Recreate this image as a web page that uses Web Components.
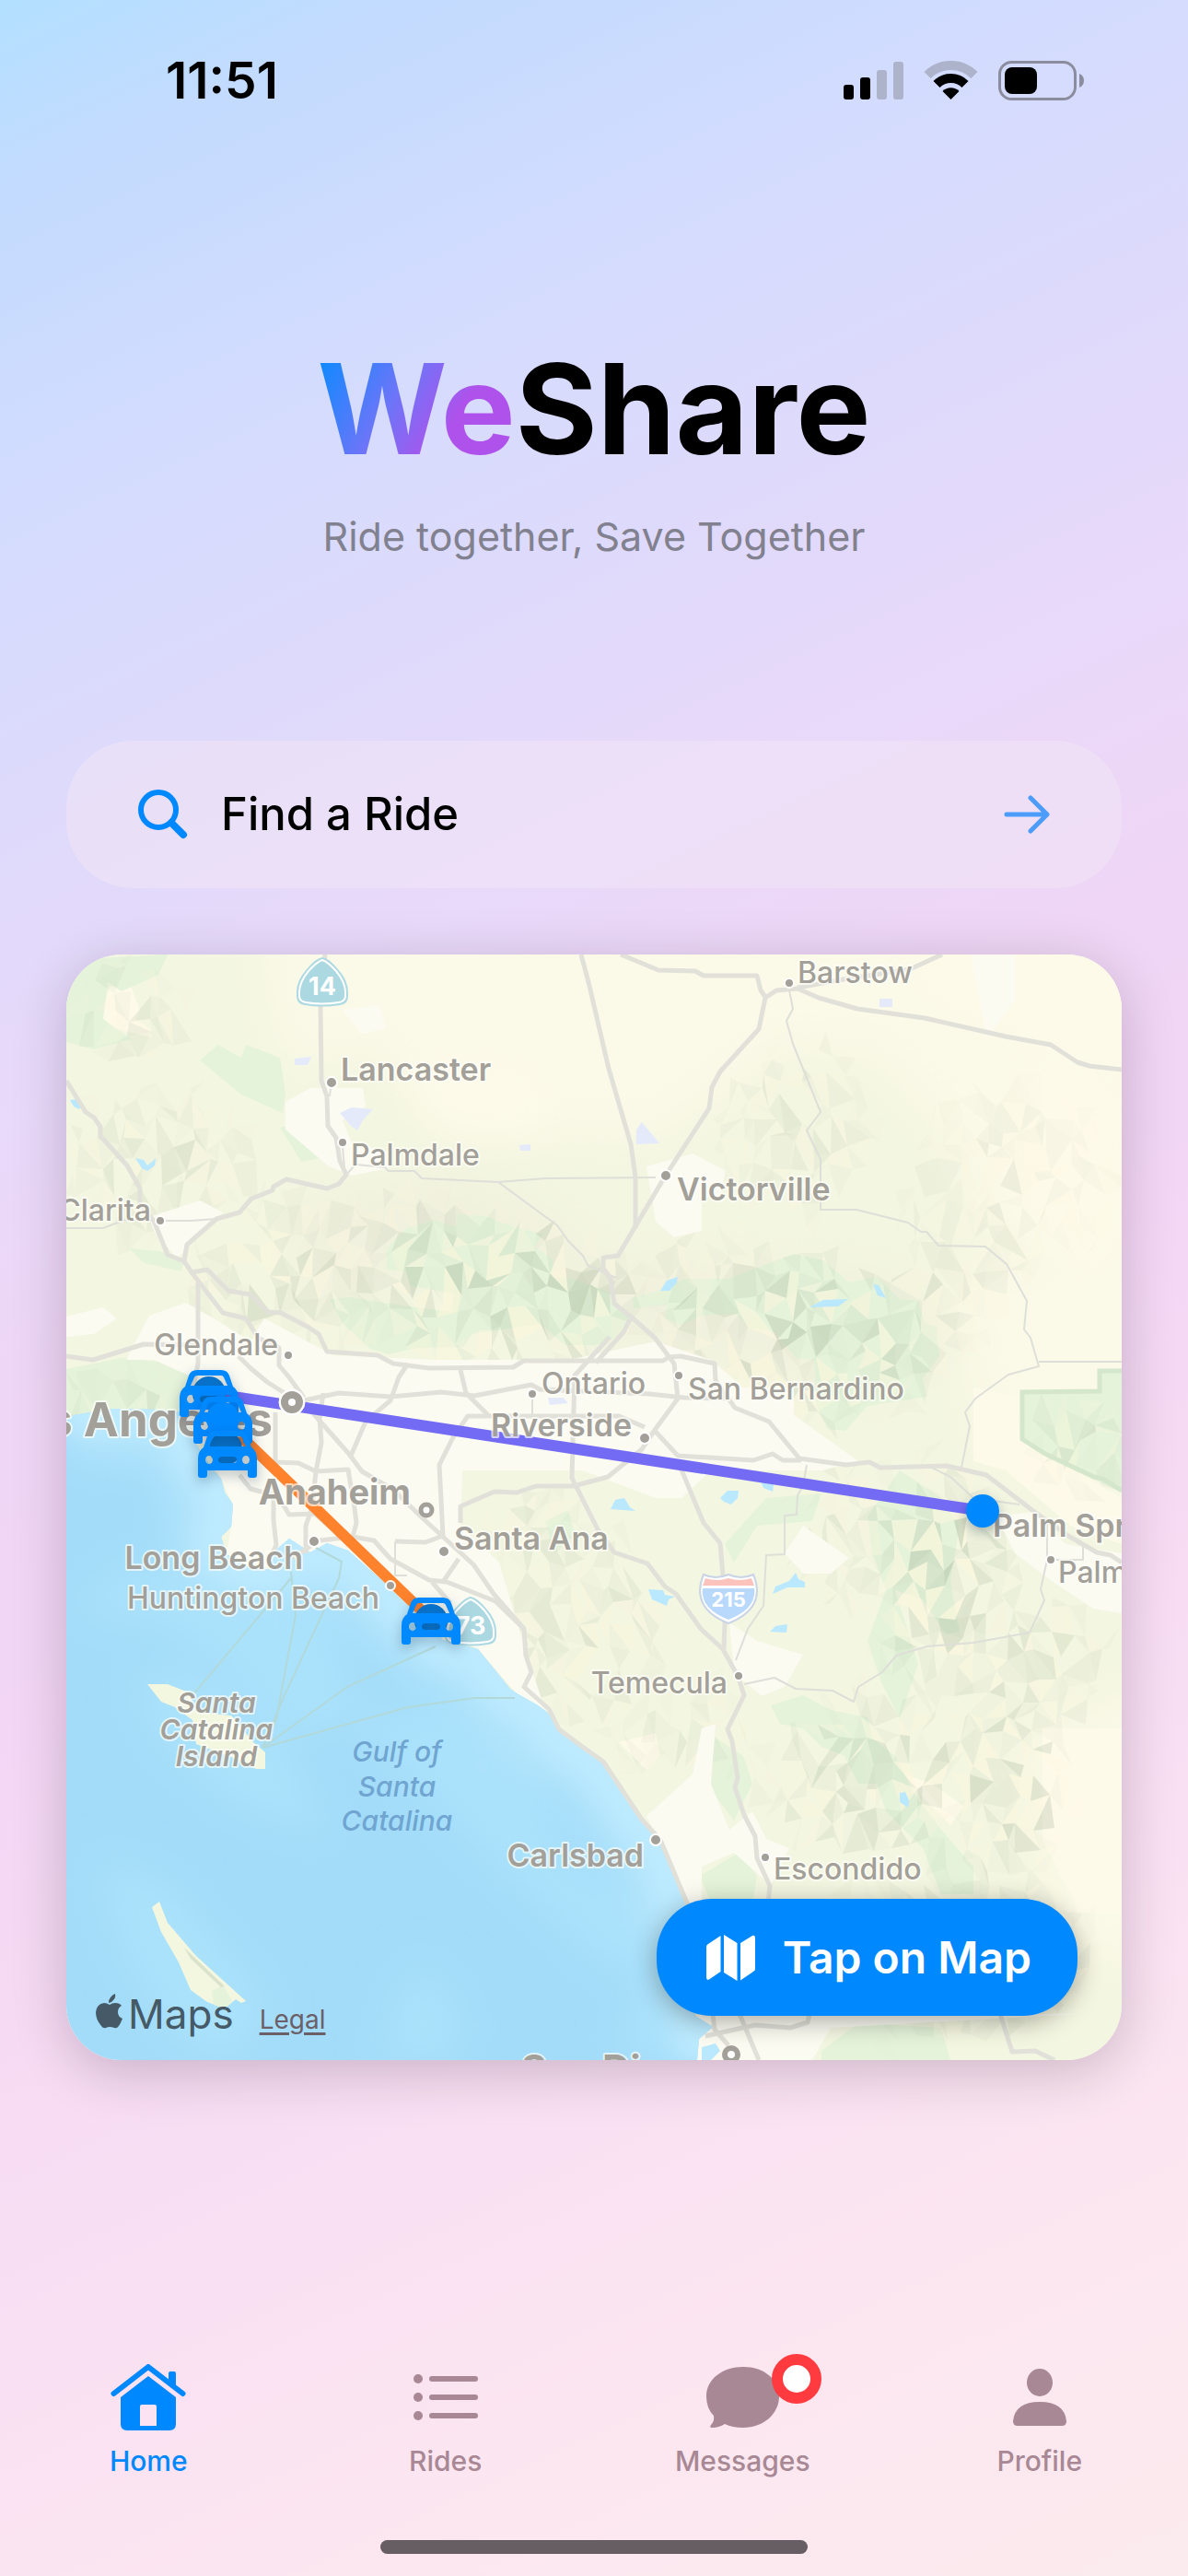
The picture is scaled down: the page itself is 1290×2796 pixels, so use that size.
<!DOCTYPE html>
<html lang="en">
<head>
<meta charset="utf-8">
<meta name="viewport" content="width=device-width, initial-scale=1">
<title>WeShare</title>
<style>
    html { height: 100%; }
    body {
        margin: 0;
        min-height: 100%;
        font-family: Inter, "Liberation Sans", sans-serif;
        color: #000;
        --blue: #0088ff;
        --muted: #a78894;
    }
</style>
</head>
<body>
<app-shell>
    <status-bar slot="top" time="11:51"></status-bar>
    <app-title lead="We" rest="Share">Ride together, Save Together</app-title>
    <search-pill>Find a Ride</search-pill>
    <ride-map>
        <map-button slot="action">Tap on Map</map-button>
    </ride-map>
    <tab-bar slot="bottom">
        <tab-item icon="home" active>Home</tab-item>
        <tab-item icon="list">Rides</tab-item>
        <tab-item icon="bubble" badge>Messages</tab-item>
        <tab-item icon="person">Profile</tab-item>
    </tab-bar>
</app-shell>

<script>
class AppShell extends HTMLElement {
    constructor() {
        super();
        this.attachShadow({ mode: 'open' }).innerHTML = `
            <style>
                :host {
                    display: flex; flex-direction: column; min-height: 100vh; box-sizing: border-box;
                    background: linear-gradient(155deg, #b3e0ff 0%, #c2dbfe 6%, #d4dcfe 17%, #dfdafb 27%, #e8d9fa 35%, #eed6f6 44%, #f3d6f5 55%, #f6daf3 65%, #f9e0f3 75%, #fce7f0 88%, #fbeaee 100%);
                }
                main { display: flex; flex-direction: column; gap: 72px; padding: 0 72px; }
                .bottom { margin-top: auto; }
            </style>
            <slot name="top"></slot>
            <main><slot></slot></main>
            <div class="bottom"><slot name="bottom"></slot></div>
        `;
    }
}

class StatusBar extends HTMLElement {
    constructor() {
        super();
        this.attachShadow({ mode: 'open' });
    }

    connectedCallback() {
        this.shadowRoot.innerHTML = `
            <style>
                :host { display: flex; justify-content: space-between; align-items: center; padding: 54px 113px 0 180px; }
                time { font-size: 55px; line-height: 66px; font-weight: 600; }
                .icons { display: flex; align-items: center; gap: 22px; }
                svg { display: block; }
            </style>
            <time>${this.getAttribute('time')}</time>
            <div class="icons">
                <svg width="65" height="42" viewBox="0 0 65 42">
                    <rect x="0" y="26" width="11" height="16" rx="3"/>
                    <rect x="18" y="18" width="11" height="24" rx="3"/>
                    <g fill="#adb3ca"><rect x="36" y="10" width="11" height="32" rx="3"/><rect x="54" y="1" width="11" height="41" rx="3"/></g>
                </svg>
                <svg width="59" height="42" viewBox="0 0 59 42" fill="none" stroke-width="10">
                    <path d="M4 15.5a36 36 0 0 1 51 0" stroke="#adb3ca"/>
                    <path d="M14 25.5a22 22 0 0 1 31 0" stroke="#000"/>
                    <path d="M29.500 42L20.500 33a12.700 12.700 0 0 1 18 0Z" fill="#000"/>
                </svg>
                <svg width="93" height="43" viewBox="0 0 93 43">
                    <rect x="1.500" y="1.500" width="82" height="40" rx="13" fill="none" stroke="#8b8c9e" stroke-width="3"/>
                    <rect x="7" y="7" width="35" height="29" rx="8"/>
                    <path d="M88 14q5 2 5 7.500t-5 7.500Z" fill="#8b8c9e"/>
                </svg>
            </div>
        `;
    }
}

class AppTitle extends HTMLElement {
    constructor() {
        super();
        this.attachShadow({ mode: 'open' });
    }

    connectedCallback() {
        this.shadowRoot.innerHTML = `
            <style>
                :host { display: block; text-align: center; padding: 240px 0 122px; }
                h1 { margin: 0; font-size: 136px; line-height: 168px; font-weight: 700; }
                h1 span { background: linear-gradient(120deg, #0a8bff 5%, #6d75f8 40%, #af52eb 66%); background-clip: text; -webkit-background-clip: text; color: transparent; }
                p { margin: 26px 0 0; font-size: 43px; line-height: 56px; color: #81818f; }
            </style>
            <h1><span>${this.getAttribute('lead')}</span>${this.getAttribute('rest')}</h1>
            <p><slot></slot></p>
        `;
    }
}

class SearchPill extends HTMLElement {
    constructor() {
        super();
        this.attachShadow({ mode: 'open' }).innerHTML = `
            <style>
                :host { display: block; }
                button {
                    display: flex; align-items: center; gap: 36px; width: 100%; height: 160px; box-sizing: border-box;
                    padding: 0 78px; border: 0; border-radius: 72px; background: rgba(240, 230, 246, .55);
                    font: 500 49px/60px Inter, "Liberation Sans", sans-serif; color: #000; text-align: left;
                }
                .label { flex: 1; }
                svg { fill: none; stroke-linecap: round; stroke-linejoin: round; flex: none; }
            </style>
            <button type="button">
                <svg width="54" height="54" viewBox="0 0 54 54" stroke="#0088ff">
                    <circle cx="22" cy="22" r="19" stroke-width="6"/><path d="M36 36L49 49" stroke-width="8"/>
                </svg>
                <span class="label"><slot></slot></span>
                <svg width="50" height="42" viewBox="0 0 50 42" stroke="#4c9dfa" stroke-width="5">
                    <path d="M3 21H46M29 3L47 21L29 39"/>
                </svg>
            </button>
        `;
    }
}

class MapButton extends HTMLElement {
    constructor() {
        super();
        this.attachShadow({ mode: 'open' }).innerHTML = `
            <style>
                :host { display: block; }
                button {
                    display: flex; align-items: center; gap: 30px; height: 127px; padding: 0 50px 0 54px; border: 0; border-radius: 60px;
                    background: #0088ff; color: #fff; font: 600 48px/60px Inter, "Liberation Sans", sans-serif;
                    box-shadow: 0 6px 28px rgba(0, 0, 0, .32);
                }
            </style>
            <button type="button">
                <svg width="53" height="50" viewBox="0 0 53 50" fill="#fff">
                    <path d="M2 10L15.500 1V40L3 48.500Q0 50 0 46V13Q0 11 2 10Z"/>
                    <path d="M19 0L33.500 9V50L19 41Z"/>
                    <path d="M37 9L50 1Q53 0 53 4V37Q53 39 51 40L37 49.500Z"/>
                </svg>
                <slot></slot>
            </button>
        `;
    }
}

const LABELS = [
    // [text, x, baseline, class, anchor]
    ['Barstow', 794, 31, 'town'],
    ['Lancaster', 298, 137, 'city'],
    ['Palmdale', 309, 229, 'town'],
    ['Santa Clarita', 92, 289, 'town', 'end'],
    ['Victorville', 663, 267, 'city'],
    ['Glendale', 230, 435, 'town', 'end'],
    ['Ontario', 516, 477, 'town'],
    ['San Bernardino', 675, 483, 'town'],
    ['Riverside', 614, 523, 'city', 'end'],
    ['Los Angeles', 224, 523, 'metro', 'end'],
    ['Anaheim', 374, 597, 'large', 'end'],
    ['Santa Ana', 421, 646, 'city'],
    ['Long Beach', 257, 667, 'city', 'end'],
    ['Huntington Beach', 340, 710, 'town', 'end'],
    ['Palm Springs', 1006, 632, 'city'],
    ['Palm Desert', 1077, 682, 'town'],
    ['Temecula', 718, 802, 'town', 'end'],
    ['Carlsbad', 627, 990, 'city', 'end'],
    ['Escondido', 768, 1004, 'town'],
    ['San Diego', 494, 1225, 'port'],
    ['Santa', 163, 823, 'island', 'middle'],
    ['Catalina', 163, 852, 'island', 'middle'],
    ['Island', 163, 881, 'island', 'middle'],
    ['Gulf of', 359, 876, 'gulf', 'middle'],
    ['Santa', 359, 914, 'gulf', 'middle'],
    ['Catalina', 359, 951, 'gulf', 'middle']
];

const DOTS = [
    // [x, y, radius]
    [785, 31, 5], [288, 139, 6], [300, 204, 5], [102, 289, 5], [651, 240, 6], [241, 435, 5], [506, 477, 5],
    [665, 457, 5], [628, 525, 6], [410, 648, 6], [269, 637, 6], [352, 685, 5], [1069, 657, 5], [730, 783, 5],
    [640, 961, 6], [759, 980, 5]
];

const ROADS = [
    '281,0 276,56 277,137 283,154 284,186 293,199 297,224 304,239 296,249 283,254 239,244 225,252 224,256 201,265 188,280 163,287 131,315 128,332',
    '0,137 21,171 30,177 37,187 37,197 66,229 80,254 80,271 95,289 110,326 128,333 136,345 153,342 176,365 200,369 219,388 233,389 262,404 274,412 283,431 338,435 355,444 394,449 485,448 497,441 648,441 654,437 667,436 704,444 705,462 719,484',
    '136,345 170,389 195,395 208,416 231,427 231,446 242,459 258,481',
    '143,356 143,444 138,470',
    '0,436 29,440 55,432 84,423 141,424',
    '187,436 200,449 218,464 237,476 256,484 275,506 306,541 321,561 355,581 386,611 409,632 442,662 464,694 497,732 499,761 505,779 497,795 524,819 535,841 562,861 583,876 625,939 645,961 662,1001 675,1032',
    '258,484 296,476 352,480 407,475 443,479 505,467 514,472 633,477 671,481 719,482 726,492 763,507 796,547 847,554 872,551 884,557 956,555 999,565 1050,604 1088,631 1119,649 1134,652 1146,660',
    '371,444 361,459 352,484 325,507 309,544',
    '227,497 227,551 252,552 271,561 306,559 313,601 315,617 311,632',
    '225,575 225,614 228,641 223,651',
    '279,476 275,504 277,530 271,561 267,600 260,620 260,650',
    '188,565 200,580 230,588 242,608 270,607 285,620',
    '245,655 275,636 311,632 334,636 352,656 394,679 413,681 466,702 497,732',
    '357,637 390,638 409,631 405,554 420,524 436,501 600,501 628,513',
    '409,681 426,656', '397,681 417,704',
    '428,451 434,476 459,501',
    '590,415 552,457 549,568 577,624 595,649 631,661 650,686 662,694 689,732 713,754 729,783 736,804 718,841 723,854 729,894 726,904 736,934 748,957 750,981 764,1011 762,1030',
    '428,617 428,599 465,583 489,584 510,577 551,577 588,567 625,537 639,516 664,482 660,444 639,416 614,394 595,379 591,352 583,341 583,329 599,327 650,241 698,167 701,144 710,127 752,81 759,47 771,39 794,37 817,47 859,59 932,69 1020,89 1069,98 1098,117 1111,121 1146,125',
    '612,396 605,410 575,443',
    '602,0 643,17 683,18 692,23 750,23 754,39 759,46',
    '794,36 844,27 916,16 951,0',
    '559,0 568,34 589,124 613,206 618,241 618,297',
    '639,517 664,544 746,549 767,542 778,549 798,549',
    '667,557 692,617 710,639 713,674', '715,724 714,754',
    '702,1150 704,1167 719,1184', '694,1174 748,1162 786,1165 805,1159 807,1150', '731,1150 752,1200',
    '1014,1150 1027,1191 1052,1190 1073,1200'
];

const LANES = [
    '304,239 314,228 346,231 350,235 378,235 386,243 469,247 520,243 640,242',
    '469,247 533,294 545,311 561,327 566,337 588,347 597,351',
    '785,39 789,59 782,72 789,97 819,171 804,191 819,222 819,277 858,277 914,291 928,301 934,301 947,316 998,317 1021,336 1043,376 1040,407 1047,416 1056,447 1023,456 987,482 976,497 981,512 972,557',
    '1056,442 1146,442',
    '804,554 800,577 794,587 793,608 780,609 780,651 760,652 757,707 740,732 727,766',
    '736,792 769,785 792,797 832,799 855,811 860,795 886,779 901,761 935,751 985,747 1046,736 1062,701 1058,689 1065,657 1065,617',
    '1065,657 1104,657 1104,638', '940,557 960,567 985,590 1035,597',
    '0,297 40,297 64,288 112,289 135,289 163,287', '506,477 506,501',
    '357,637 357,674 370,674', '286,154 287,145', '300,209 302,232'
];

const FERRIES = [
    '271,644 299,659 296,677 237,804 213,861', '244,677 138,803', '244,670 249,717 228,830 213,861',
    '401,751 305,795 213,861', '487,807 443,807 371,817 213,861'
];

const COAST = '0,505 8,500 50,493 100,494 125,497 140,530 160,560 168,569 172,584 181,597 179,621 168,632 174,651 202,667 221,667 227,647 242,634 265,649 283,639 306,647 340,677 371,707 409,744 447,754 482,797 489,802 512,815 524,824 535,844 562,862 583,877 625,939 645,961 664,1007 673,1032 680,1100 683,1152 702,1164 687,1177 685,1200';

const FORESTS = [
    '425,282 455,284 481,294 518,304 508,317 528,331 528,351 548,351 591,367 613,397 595,417 575,424 541,424 515,401 475,407 441,412 431,426 380,427 350,434 330,428 300,400 286,374 308,372 345,378 418,388 421,368 375,360 368,344 348,342 348,320 368,298 400,288 423,296',
    '615,373 640,366 672,352 720,352 750,340 790,325 822,332 850,356 880,350 905,374 925,376 932,400 945,404 948,436 930,460 934,480 870,490 846,517 826,515 815,490 812,440 792,438 770,410 740,405 728,390 690,392 668,402 650,395 652,380 616,384',
    '0,30 20,5 110,0 100,22 60,40 45,30 40,70 70,92 30,103 0,95',
    '145,115 165,98 190,112 195,98 232,112 238,150 235,172 190,152',
    '232,188 256,183 280,220 255,225 240,200',
    '0,450 60,438 130,445 135,470 120,497 50,493 8,500 0,503',
    '68,319 100,322 128,330 125,344 85,335',
    '870,610 905,560 950,590 970,620 960,680 970,735 955,738 930,700 900,690 925,770 905,830 885,790 870,745 890,690 875,650',
    '765,815 800,804 830,820 870,828 875,850 900,870 920,910 950,950 985,990 985,1020 950,1020 930,970 890,930 880,900 860,900 845,870 820,860 800,840 775,835',
    '695,900 705,850 735,870 745,900 725,940 710,920',
    '688,1000 730,975 750,1000 745,1030 700,1030',
    '370,530 405,524 445,545 490,530 480,552 430,560',
    '520,615 545,603 552,630 530,650', '1036,473 1120,472 1120,450 1146,450 1146,584 1115,569 1062,544 1036,527',
    '715,640 760,590 820,585 810,615 750,620 725,660', '820,1190 860,1160 950,1165 960,1200 820,1200'
];

const URBAN = [
    '90,392 130,378 160,395 200,420 215,395 290,435 400,440 545,440 640,420 700,440 735,470 790,470 790,500 860,550 820,560 700,560 668,590 640,590 560,560 430,560 428,620 470,660 500,760 520,820 489,802 447,754 371,707 306,647 265,649 242,634 221,667 174,651 179,621 181,597 155,540 125,497 140,460 95,440 65,440',
    '238,160 265,145 322,145 325,165 300,180 310,205 350,215 350,232 310,240 285,230 238,190',
    '630,230 680,216 716,235 710,262 690,265 690,300 660,307 640,290',
    '0,393 40,383 55,395 30,412 0,415', '90,285 145,267 170,280 120,330 95,300',
    '780,650 800,620 850,655 830,672 800,672', '720,725 750,745 800,760 780,795 755,805 725,780',
    '630,935 680,890 690,840 705,835 700,900 720,950 745,930 760,960 785,970 765,1010 725,975 690,990 690,1030 675,1032',
    '1010,610 1050,605 1085,640 1146,650 1146,715 1115,710 1070,680 1030,650',
    '685,1150 1100,1150 830,1165 810,1200 685,1200', '982,0 1030,0 1030,50 1000,90', '300,60 340,55 348,80 320,86'
];

const SANDS = [
    '47,35 70,35 80,60 75,70 92,82 92,90 60,82 35,75', '910,890 940,900 975,925 960,945 930,915',
    '1060,840 1146,840 1146,1040 1100,1040 1060,960',
    '600,855 640,845 645,870 630,885', '985,470 1030,480 1036,527 1146,590 1146,640 1090,620 1020,560 985,550'
];

const LAKES = [
    '4,158 12,157 17,163 14,168 8,165', '75,221 84,223 88,229 93,225 97,221 96,229 88,235 82,232',
    '645,365 652,354 664,350 663,356 655,365', '807,383 822,375 849,374 838,382', '876,358 882,359 890,373 881,370',
    '591,602 596,592 606,590 612,600 618,604', '710,590 718,582 730,582 729,590 722,597 714,594', '754,572 768,575 767,583 757,579',
    '632,689 648,690 650,695 661,697 654,700 652,707 636,700', '767,694 770,686 785,680 792,671 795,678 802,681 802,687 783,687',
    '764,735 770,729 783,727 782,736', '905,910 911,909 915,918 914,926 905,920', '690,1186 705,1182 710,1190 700,1200 690,1200'
];

const SALT = ['248,113 266,111 262,120 248,120', '297,172 310,166 333,168 322,180 316,191 308,185', '619,190 625,182 644,205 619,206', '883,48 897,48 897,57 883,57', '492,207 504,206 504,213 493,213', '523,481 540,481 545,487 525,489'];

// [cx, cy, rx, ry, strength] ellipses in which the relief shows
const RANGES = [
    [90, 210, 110, 100, .6], [60, 55, 70, 60, .5], [60, 465, 80, 35, .5],
    [250, 335, 140, 85, .8], [470, 355, 165, 85, 1.4], [370, 300, 90, 60, .7],
    [790, 410, 185, 100, 1.1], [700, 330, 100, 45, .5], [950, 360, 70, 70, .6],
    [940, 660, 90, 130, 1.2], [1030, 760, 100, 80, .8], [890, 880, 160, 100, .9],
    [1010, 890, 80, 140, .9], [960, 1080, 180, 100, .7], [780, 180, 90, 110, .5],
    [1010, 240, 130, 130, .4], [550, 720, 110, 120, .6], [500, 620, 60, 60, .5],
    [660, 830, 90, 70, .4], [1090, 520, 65, 65, .6], [850, 620, 80, 90, .5]
];

// Jittered mesh of shaded facets. The seed is fixed, so that it is the same on each load
function drawRelief() {
    let seed = 41;
    const rnd = () => (seed = (seed * 16807) % 2147483647) / 2147483647;
    const stepX = 17, stepY = 23;
    const cols = Math.ceil(1146 / stepX) + 1;
    const rows = Math.ceil(1200 / stepY) + 1;
    const point = (c, r) => grid[r * (cols + 1) + c];
    const grid = [];
    for (let r = 0; r <= rows; r++) {
        for (let c = 0; c <= cols; c++) {
            grid.push([Math.round((c - .5 + rnd() * .95) * stepX), Math.round((r - .5 + rnd() * .95) * stepY)]);
        }
    }
    let out = '';
    for (let r = 0; r < rows; r++) {
        for (let c = 0; c < cols; c++) {
            const [x, y] = point(c, r);
            const strength = Math.max(...RANGES.map(([cx, cy, rx, ry, s]) => s * (1 - ((x - cx) / rx) ** 2 - ((y - cy) / ry) ** 2)));
            const quad = rnd() < .5
                ? [[point(c, r), point(c + 1, r), point(c, r + 1)], [point(c + 1, r), point(c + 1, r + 1), point(c, r + 1)]]
                : [[point(c, r), point(c + 1, r), point(c + 1, r + 1)], [point(c, r), point(c + 1, r + 1), point(c, r + 1)]];
            for (const triangle of quad) {
                const shade = rnd();
                if (strength <= 0) continue;
                const depth = Math.min(1, strength);
                const [fill, opacity] = shade < .25 ? ['#fdf6dc', .6 * depth] : ['#93a588', (shade - .25) ** 2 * .62 * depth];
                if (opacity > .02) out += `<polygon points="${triangle.join(' ')}" fill="${fill}" opacity="${opacity.toFixed(2)}"/>`;
            }
        }
    }
    return out;
}

const polys = (list, attrs) => `<g ${attrs}>${list.map(p => `<polygon points="${p}"/>`).join('')}</g>`;
const lines = (list, attrs) => `<g fill="none" stroke-linejoin="round" ${attrs}>${list.map(p => `<polyline points="${p}"/>`).join('')}</g>`;

const stateShield = (x, y, text) => `
    <g transform="translate(${x} ${y})">
        <path d="M28 0Q35 1 45 13Q56 25 56 38V42Q56 51 47 52Q28 55 9 52Q0 51 0 42V38Q0 25 11 13Q21 1 28 0Z" fill="#add9e2"/>
        <path d="M28 3Q34 5 43 15Q53 27 53 38V42Q53 48 46 49Q28 52 10 49Q3 48 3 42V38Q3 27 13 15Q22 5 28 3Z" fill="#abd8e1" stroke="#fff" stroke-width="2"/>
        <text x="28" y="41" class="route" text-anchor="middle">${text}</text>
    </g>`;

class RideMap extends HTMLElement {
    constructor() {
        super();
        this.attachShadow({ mode: 'open' });
    }

    connectedCallback() {
        this.render();
    }

    render() {
        const sea = `${COAST} 0,1200`;
        this.shadowRoot.innerHTML = `
            <style>
                :host { display: block; position: relative; border-radius: 60px; box-shadow: 0 12px 60px rgba(20, 0, 20, .2); }
                .map { display: block; width: 100%; aspect-ratio: 1146 / 1200; border-radius: 60px; }
                text { font-family: Inter, "Liberation Sans", sans-serif; fill: #a39f99; }
                .labels text { paint-order: stroke; stroke: rgba(255, 255, 250, .7); stroke-width: 4px; stroke-linejoin: round; }
                .town { font-size: 32px; font-weight: 500; }
                .city { font-size: 34px; font-weight: 600; }
                .large { font-size: 38px; font-weight: 700; }
                .metro { font-size: 51px; font-weight: 700; }
                .port { font-size: 42px; font-weight: 700; }
                .island { font-size: 30px; font-weight: 600; font-style: italic; }
                .labels .gulf { font-size: 30px; font-weight: 500; font-style: italic; fill: #70a5d1; stroke: none; }
                .route { font-size: 27px; font-weight: 700; fill: #fff; }
                .car { filter: drop-shadow(0 5px 7px rgba(0, 30, 60, .3)); }
                .credit { position: absolute; left: 32px; bottom: 22px; display: flex; align-items: baseline; color: #455a66; }
                .credit svg { margin-right: 5px; }
                .brand { font-size: 44px; line-height: 56px; margin-right: 28px; }
                a { font-size: 28px; line-height: 32px; color: #6b6068; text-decoration: underline; text-decoration-thickness: 3px; text-underline-offset: 4px; }
                slot[name=action] { position: absolute; right: 48px; bottom: 48px; display: block; }
            </style>
            <svg class="map" viewBox="0 0 1146 1200" preserveAspectRatio="xMidYMid slice" role="img" aria-label="Rides around Los Angeles">
                <defs>
                    <clipPath id="sea"><polygon points="${sea}"/></clipPath>
                    <filter id="soft" x="-20%" y="-20%" width="140%" height="140%"><feGaussianBlur stdDeviation="24"/></filter>
                    <filter id="edge"><feGaussianBlur stdDeviation="13"/></filter>
                    <path id="carShape" fill-rule="evenodd" d="M19 0H45Q52 0 54 6L58 18Q64 22 64 30V48Q64 51 61 51H57Q54 51 54 48V43H10V48Q10 51 7 51H3Q0 51 0 48V30Q0 22 6 18L10 6Q12 0 19 0ZM19 6Q17 6 16 8L12 17H52L48 8Q47 6 45 6ZM12 27A4 4.500 0 1 0 12 36A4 4.500 0 1 0 12 27ZM52 27A4 4.500 0 1 0 52 36A4 4.500 0 1 0 52 27ZM26 28Q22 28 22 31.500T26 35H38Q42 35 42 31.500T38 28Z"/>
                </defs>
                <rect width="1146" height="1200" fill="#f3f6e1"/>
                <g filter="url(#soft)" fill="#fbf9e8">
                    <path d="M210 -40H1200V380L1000 300L960 200L880 110L780 100L640 200L420 190L330 100L240 120Z"/>
                    <path d="M960 350L1200 300V620L1000 540ZM1040 860L1200 780V1100L1080 1080Z"/>
                </g>
                <g filter="url(#soft)" fill="#fefaea"><path d="M880 -40H1200V130L960 50ZM380 120L500 130L520 190L400 180ZM1050 100L1146 170L1130 360L1040 250Z"/></g>
                <path d="M250 270L420 240L520 280L590 345L640 330L760 340L900 350L960 420L880 480L620 420L400 350L260 380Z" fill="#f0f1de" filter="url(#soft)"/>
                ${polys(SANDS, 'fill="#fefaea"')}
                ${polys(FORESTS, 'fill="#e4f3da"')}
                ${drawRelief()}
                ${polys(URBAN, 'fill="#fbfbf2"')}
                ${polys(SALT, 'fill="#e4eafa"')}
                <polyline points="1146,452 1122,452 1122,474 1038,475 1038,526 1063,542 1116,567 1126,569 1146,582" fill="none" stroke="#d4e7cc" stroke-width="5"/>
                <polygon points="${sea}" fill="#a3dcf9"/>
                <g clip-path="url(#sea)">
                    <g filter="url(#soft)">
                        <polyline points="${COAST}" fill="none" stroke="#b8e8fd" stroke-width="90"/>
                        <path d="M60 660Q150 700 260 670L320 820L240 850Q150 700 0 720ZM70 780L150 780L250 880L290 960L180 920L100 850ZM30 980L110 1010L220 1140L180 1200L130 1180L70 1100ZM650 1040L700 1200L600 1200ZM380 1090L430 1150L420 1200L340 1200ZM300 820L480 830L540 980L640 1050L600 1110L480 1000Z" fill="#abe2fb"/>
                    </g>
                    <polyline points="${COAST}" fill="none" stroke="#bdeafe" stroke-width="48" filter="url(#edge)"/>
                </g>
                <g fill="#f3f7e0">
                    <path d="M88 792H110L133 801L141 822L179 826L202 854L216 866V884H206L187 874L141 857L137 831L118 817L103 811Z"/>
                    <path d="M93 1034L101 1028L110 1051L141 1087L195 1136L190 1138L184 1134L172 1144L153 1137L135 1124L122 1094L103 1061Z"/>
                    <path d="M158 1125L170 1119L180 1135L172 1144L160 1140Z" fill="#e5f3da"/>
                    <path d="M128 1078L172 1120L168 1121L135 1090Z" fill="#dbe2cb"/>
                </g>
                ${polys(LAKES, 'fill="#bae8fe"')}
                ${lines(FERRIES, 'stroke="#b2d9da" stroke-width="2"')}
                ${lines(LANES, 'stroke="#dedfd8" stroke-width="2"')}
                ${lines(ROADS, 'stroke="#e1e1da" stroke-width="5"')}
                ${stateShield(250, 3, '14')}
                ${stateShield(411, 697, '73')}
                <g transform="translate(687 673)">
                    <path d="M5 0Q18 6 32 0Q46 6 59 0Q74 36 32 53Q-10 36 5 0Z" fill="#fff" stroke="#c9d4e5" stroke-width="2"/>
                    <path d="M7 4Q20 8 32 4Q44 8 57 4L60 12H4Z" fill="#fcc3bd"/>
                    <path d="M4 15H60Q63 37 32 49Q1 37 4 15Z" fill="#b9d9fc"/>
                    <text x="32" y="35" class="route" style="font-size: 22px" text-anchor="middle">215</text>
                </g>
                <line x1="155" y1="476" x2="995" y2="604" stroke="#746bf5" stroke-width="12"/>
                <line x1="170" y1="504" x2="396" y2="722" stroke="#ff822d" stroke-width="12"/>
                <g fill="#a39f99" stroke="#fff" stroke-width="2">
                    ${DOTS.map(([x, y, r]) => `<circle cx="${x}" cy="${y}" r="${r}"/>`).join('')}
                </g>
                <g fill="#fff" stroke="#a39f99">
                    <circle cx="245" cy="486" r="14" stroke="#fff"/><circle cx="245" cy="486" r="8" stroke-width="8"/>
                    <circle cx="391" cy="603" r="6" stroke-width="5"/><circle cx="722" cy="1194" r="7" stroke-width="6"/>
                </g>
                <g class="labels">
                    ${LABELS.map(([text, x, y, kind, anchor = 'start']) => `<text x="${x}" y="${y}" class="${kind}" text-anchor="${anchor}">${text}</text>`).join('')}
                </g>
                <g fill="#0a7cda"><circle cx="155" cy="476" r="18"/><circle cx="173" cy="536" r="18"/><circle cx="396" cy="723" r="18"/></g>
                <g fill="#0088ff">
                    <use href="#carShape" x="123" y="451" class="car"/>
                    <use href="#carShape" x="138" y="480" class="car"/>
                    <circle cx="170" cy="504" r="18"/>
                    <use href="#carShape" x="143" y="517" class="car"/>
                    <use href="#carShape" x="364" y="698" class="car"/>
                    <circle cx="995" cy="604" r="18" class="car"/>
                </g>
            </svg>
            <div class="credit">
                <svg width="30" height="38" viewBox="0 0 30 38" fill="currentColor" aria-hidden="true">
                    <path d="M21 0Q22 4 19 7Q17 10 14 10Q14 6 16 4Q18 1 21 0ZM28 13Q24 15 24 20Q24 25 29 27Q27 32 25 35Q23 38 20 37Q15 35 11 37Q8 38 6 35Q0 28 0 20Q1 11 9 10Q12 10 15 12Q18 10 21 10Q26 10 28 13Z"/>
                </svg>
                <span class="brand">Maps</span>
                <a href="#legal">Legal</a>
            </div>
            <slot name="action"></slot>
        `;
    }
}

class TabBar extends HTMLElement {
    constructor() {
        super();
        this.attachShadow({ mode: 'open' }).innerHTML = `
            <style>
                :host { display: block; padding-bottom: 24px; }
                nav { display: grid; grid-template-columns: repeat(4, 1fr); }
                .indicator { width: 36%; height: 15px; margin: 66px auto 0; border-radius: 8px; background: #665e63; }
            </style>
            <nav aria-label="Main"><slot></slot></nav>
            <div class="indicator"></div>
        `;
    }
}

const TAB_ICONS = {
    home: `<svg width="82" height="72" viewBox="0 0 82 72" fill="currentColor">
        <path d="M3.500 32L41 3L78.500 32" fill="none" stroke="currentColor" stroke-width="6" stroke-linecap="round" stroke-linejoin="round"/>
        <path d="M63 10Q63 8 65 8H69Q71 8 71 10V26L63 20Z"/>
        <path fill-rule="evenodd" d="M41 13L71 36V65Q71 72 64 72H18Q11 72 11 65V36ZM34 44Q32 44 32 46V67H50V46Q50 44 48 44Z"/></svg>`,
    list: `<svg width="70" height="50" viewBox="0 0 70 50" fill="currentColor">
        <circle cx="5" cy="5" r="5"/><circle cx="5" cy="25" r="5"/><circle cx="5" cy="45" r="5"/>
        <rect x="17" y="2" width="53" height="6" rx="3"/><rect x="17" y="22" width="53" height="6" rx="3"/><rect x="17" y="42" width="53" height="6" rx="3"/></svg>`,
    bubble: `<svg width="79" height="66" viewBox="0 0 79 66" fill="currentColor">
        <path d="M40 0C62 0 79 13 79 32S62 66 40 66Q28 66 20 62Q14 66 6 66Q3 66 5 63Q9 59 8 53Q0 45 0 32C0 13 18 0 40 0Z"/></svg>`,
    person: `<svg width="58" height="62" viewBox="0 0 58 62" fill="currentColor">
        <ellipse cx="29" cy="15" rx="14" ry="15"/><path d="M5 62Q0 62 0 57Q2 36 29 36T58 57Q58 62 53 62Z"/></svg>`
};

class TabItem extends HTMLElement {
    constructor() {
        super();
        this.attachShadow({ mode: 'open' });
    }

    connectedCallback() {
        this.shadowRoot.innerHTML = `
            <style>
                :host { display: block; color: var(--muted); }
                :host([active]) { color: var(--blue); }
                a { display: flex; flex-direction: column; align-items: center; gap: 12px; color: inherit; text-decoration: none; font-size: 30px; line-height: 40px; font-weight: 500; }
                .icon { position: relative; display: flex; align-items: center; height: 74px; }
                .badge { position: absolute; top: -10px; right: -46px; width: 30px; height: 30px; border: 12px solid #ff3b40; border-radius: 50%; background: #fff; }
            </style>
            <a href="#${this.getAttribute('icon')}">
                <span class="icon">${TAB_ICONS[this.getAttribute('icon')]}${this.hasAttribute('badge') ? '<span class="badge"></span>' : ''}</span>
                <span><slot></slot></span>
            </a>
        `;
    }
}

customElements.define('app-shell', AppShell);
customElements.define('status-bar', StatusBar);
customElements.define('app-title', AppTitle);
customElements.define('search-pill', SearchPill);
customElements.define('map-button', MapButton);
customElements.define('ride-map', RideMap);
customElements.define('tab-bar', TabBar);
customElements.define('tab-item', TabItem);
</script>
</body>
</html>
